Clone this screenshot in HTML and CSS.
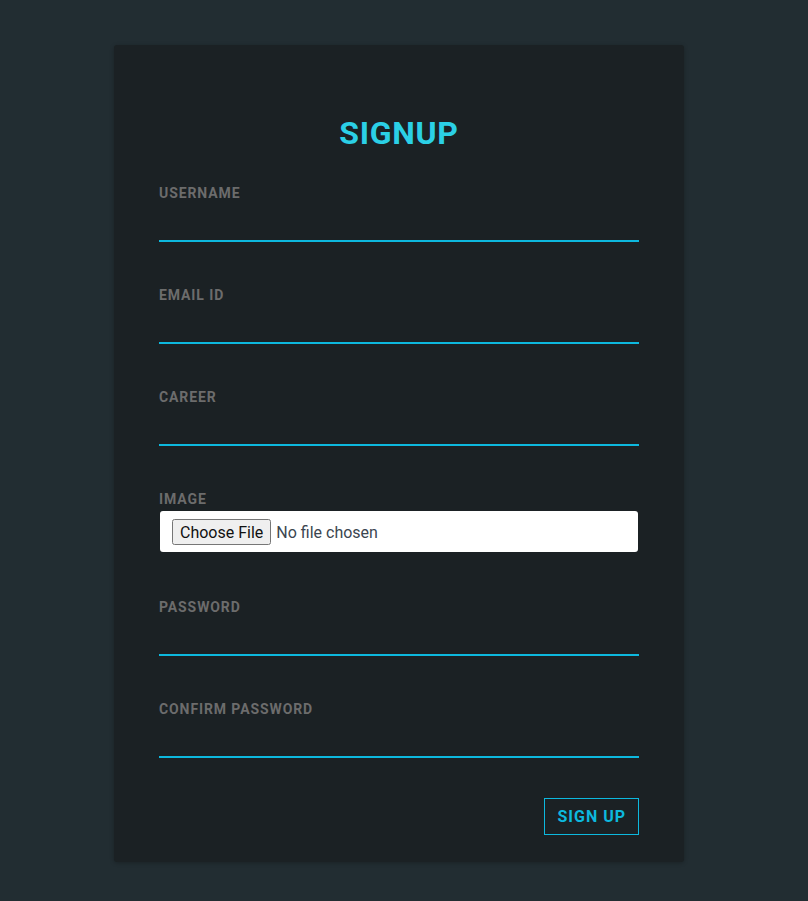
FILE: index.html
```html
<!DOCTYPE html>
<html lang="en">
<head>
<meta charset="utf-8">
<title>Signup</title>
<link rel="stylesheet" href="styles.css">
</head>
<body>
<div class="card">
  <h1 class="title">SIGNUP</h1>
  <form class="form">
    <div class="field">
      <label class="label">USERNAME</label>
      <input class="line-input" type="text">
    </div>
    <div class="field">
      <label class="label">EMAIL ID</label>
      <input class="line-input" type="text">
    </div>
    <div class="field">
      <label class="label">CAREER</label>
      <input class="line-input" type="text">
    </div>
    <div class="field field-file">
      <label class="label">IMAGE</label>
      <input class="file-input" type="file">
    </div>
    <div class="field">
      <label class="label">PASSWORD</label>
      <input class="line-input" type="password">
    </div>
    <div class="field">
      <label class="label">CONFIRM PASSWORD</label>
      <input class="line-input" type="password">
    </div>
    <div class="actions">
      <button class="btn" type="button">SIGN UP</button>
    </div>
  </form>
</div>
</body>
</html>
```
FILE: styles.css
```css
html, body {
  margin: 0;
  padding: 0;
}
body {
  background: #222d32;
  font-family: Roboto, "Open Sans", Arial, sans-serif;
  min-height: 901px;
}
.card {
  width: 570px;
  box-sizing: border-box;
  margin: 45px 0 0 114px;
  padding: 69px 45px 27px;
  background: #1b2124;
  border-radius: 3px;
  box-shadow: 0 1px 4px rgba(0, 0, 0, 0.25);
}
.title {
  margin: 0;
  font-size: 32px;
  line-height: 38px;
  font-weight: 700;
  letter-spacing: 0.7px;
  text-align: center;
  color: #2bd0e6;
}
.form {
  display: flex;
  flex-direction: column;
  margin-top: 31px;
}
.field {
  display: flex;
  flex-direction: column;
  margin-bottom: 43px;
}
.field-file {
  margin-bottom: 45px;
}
.label {
  padding-top: 2px;
  font-size: 14px;
  line-height: 16px;
  font-weight: 700;
  letter-spacing: 0.9px;
  color: #6c6c6c;
}
.line-input {
  display: block;
  height: 41px;
  box-sizing: border-box;
  margin: 0;
  padding: 0;
  background: transparent;
  border: none;
  border-bottom: 2px solid #0db8de;
  outline: none;
  color: #fff;
  font-family: Roboto, sans-serif;
  font-size: 16px;
}
.file-input {
  display: block;
  width: 478px;
  height: 41px;
  box-sizing: border-box;
  margin: 4px 0 0 1px;
  padding: 8px 12px 7px 12px;
  background: #fff;
  border: none;
  border-radius: 3px;
  color: #3b4650;
  font-family: Roboto, sans-serif;
  font-size: 16px;
}
.file-input::file-selector-button {
  height: 26px;
  padding: 0 6px;
  margin-right: 5px;
  font-family: Roboto, sans-serif;
  font-size: 16px;
  color: #111;
}
.actions {
  display: flex;
  justify-content: flex-end;
  margin-top: -3px;
}
.btn {
  margin: 0;
  padding: 8px 12px;
  background: transparent;
  border: 1px solid #0db8de;
  border-radius: 0;
  color: #0db8de;
  font-family: Roboto, sans-serif;
  font-size: 16px;
  line-height: 19px;
  font-weight: 700;
  letter-spacing: 1px;
}
```
